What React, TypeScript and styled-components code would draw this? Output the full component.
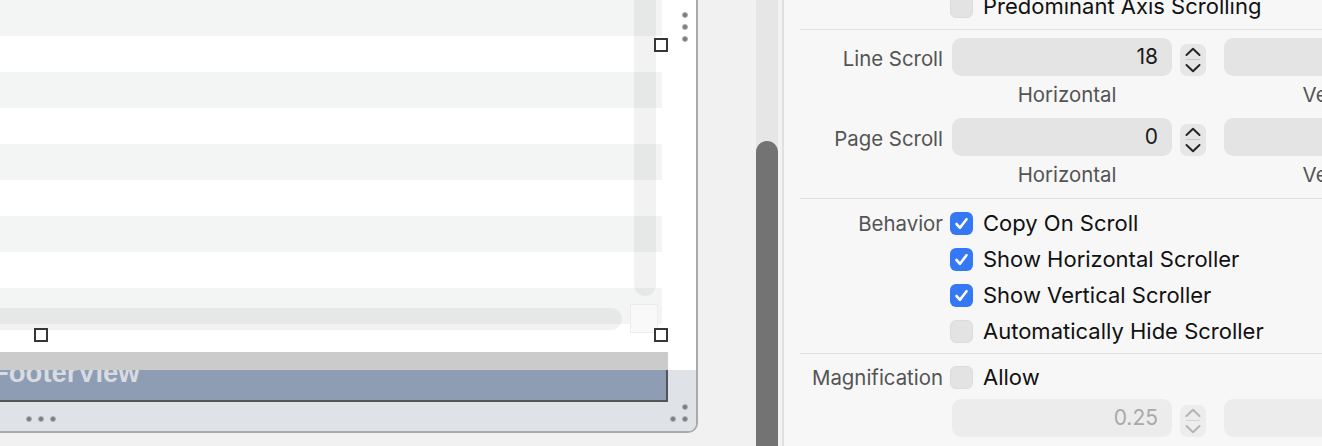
import React from "react";
import styled, { createGlobalStyle } from "styled-components";

const GlobalStyle = createGlobalStyle`
  html, body { margin: 0; padding: 0; }
  body {
    width: 1322px;
    height: 446px;
    overflow: hidden;
    background: #f1f1f1;
    font-family: Inter, "Noto Sans", sans-serif;
  }
`;

const Root = styled.div`
  display: flex;
  width: 1322px;
  height: 446px;
  overflow: hidden;
`;

/* ---------- canvas side ---------- */
const Canvas = styled.div`
  width: 756px;
  flex: none;
  background: #f1f1f1;
  overflow: hidden;
`;

const Window = styled.div`
  position: relative;
  width: 696px;
  height: 431px;
  background: #ffffff;
  border-right: 2px solid #a9a9a9;
  border-bottom: 2px solid #a9a9a9;
  border-bottom-right-radius: 10px;
  overflow: hidden;
  display: flex;
  flex-direction: column;
`;

const TableArea = styled.div`
  position: relative;
  height: 352px;
  flex: none;
`;

const ScrollView = styled.div`
  position: relative;
  width: 662px;
  height: 330px;
  overflow: hidden;
`;

const Row = styled.div<{ $alt: boolean }>`
  height: 36px;
  background: ${(p) => (p.$alt ? "#ffffff" : "#f3f4f4")};
`;

const VScroller = styled.div`
  position: absolute;
  left: 634px;
  top: 0;
  width: 22px;
  height: 296px;
  border-radius: 0 0 11px 11px;
  background: rgba(0, 0, 0, 0.05);
`;

const HScroller = styled.div`
  position: absolute;
  left: -30px;
  top: 308px;
  width: 652px;
  height: 22px;
  border-radius: 11px;
  background: rgba(0, 0, 0, 0.05);
`;

const Corner = styled.div`
  position: absolute;
  left: 630px;
  top: 304px;
  width: 26px;
  height: 27px;
  background: #f9f9f9;
  border: 1px solid #ececec;
`;

const Handle = styled.span<{ $x: number; $y: number }>`
  position: absolute;
  left: ${(p) => p.$x}px;
  top: ${(p) => p.$y}px;
  width: 10px;
  height: 10px;
  border: 2px solid #363636;
  background: #ffffff;
`;

const Dot = styled.span`
  display: block;
  width: 6px;
  height: 6px;
  border-radius: 50%;
  background: radial-gradient(circle, #7a7a7a 0 30%, #b3b3b3 65%, rgba(200, 200, 200, 0) 100%);
`;

const SideDots = styled.div`
  position: absolute;
  left: 682px;
  top: 12px;
  display: flex;
  flex-direction: column;
  gap: 6px;
`;

const BottomArea = styled.div`
  flex: 1;
  display: flex;
  flex-direction: column;
  background: linear-gradient(#ffffff 18px, #dfe2e7 18px);
`;

const FooterBox = styled.div`
  position: relative;
  width: 668px;
  height: 50px;
  flex: none;
  background: #8e9db4;
  box-shadow: inset -2px -2px 0 #555555;
  overflow: hidden;
`;

const FooterBar = styled.div`
  position: absolute;
  left: 0;
  top: 0;
  right: 0;
  height: 18px;
  background: #cbcbcb;
`;

const FooterLabel = styled.div`
  font-family: "Liberation Sans", Arial, sans-serif;
  font-weight: bold;
  font-size: 27.5px;
  line-height: 27px;
  color: #d8dbe0;
  margin-left: -8px;
  padding-top: 7px;
  white-space: nowrap;
`;

const BottomBar = styled.div`
  flex: 1;
  display: flex;
  justify-content: space-between;
  align-items: flex-end;
  padding: 0 8px 9px 26px;
`;

const DotRow = styled.div`
  display: flex;
  gap: 6px;
`;

const DotCorner = styled.div`
  display: grid;
  grid-template-columns: 6px 6px;
  grid-template-rows: 6px 6px;
  gap: 6px;
`;

const ScrollerColumn = styled.div`
  width: 22px;
  flex: none;
  background: #e6e6e6;
  display: flex;
  flex-direction: column;
  justify-content: flex-end;
`;

const Thumb = styled.div`
  height: 305px;
  background: #737373;
  border-radius: 11px 11px 0 0;
`;

const Edge = styled.div`
  width: 4px;
  flex: none;
  background: #f3f3f3;
  border-right: 2px solid #e0e0e0;
`;

/* ---------- inspector ---------- */
const Inspector = styled.div`
  flex: 1;
  min-width: 0;
  background: #f7f7f7;
  overflow: hidden;
  font-size: 20.4px;
  color: #151515;
`;

const Section = styled.div<{ $first?: boolean }>`
  margin-left: 16px;
  border-top: ${(p) => (p.$first ? "none" : "1px solid #e2e2e2")};
`;

const FirstSection = styled(Section)`
  margin-top: -12px;
  padding-bottom: 5px;
`;

const ScrollSection = styled(Section)`
  padding: 8px 0 11px;
`;

const BehaviorSection = styled(Section)`
  padding: 6px 0 4px;
`;

const MagSection = styled(Section)`
  padding: 5px 0 0;
`;

const FormRow = styled.div<{ $gapTop?: number }>`
  display: grid;
  grid-template-columns: 143px max-content;
  column-gap: 7px;
  align-items: center;
  margin-top: ${(p) => p.$gapTop ?? 0}px;
`;

const Label = styled.div<{ $drop?: number }>`
  text-align: right;
  color: #545454;
  white-space: nowrap;
  padding-top: ${(p) => p.$drop ?? 0}px;
`;

const CheckItem = styled.label`
  display: flex;
  align-items: center;
  gap: 10px;
  height: 36px;
  white-space: nowrap;
  font-size: 22px;
  color: #111111;
`;

const Box = styled.span<{ $on: boolean }>`
  width: 23px;
  height: 23px;
  flex: none;
  border-radius: 6px;
  box-sizing: border-box;
  background: ${(p) => (p.$on ? "#3478f6" : "#e3e3e3")};
  border: ${(p) => (p.$on ? "none" : "1px solid #dcdcdc")};
  display: flex;
  align-items: center;
  justify-content: center;
`;

const Fields = styled.div`
  display: flex;
  align-items: center;
  margin-left: 2px;
`;

const NumberField = styled.div<{ $disabled?: boolean }>`
  width: 220px;
  height: 38px;
  flex: none;
  box-sizing: border-box;
  border-radius: 9px;
  background: ${(p) => (p.$disabled ? "#ececec" : "#e4e4e4")};
  color: ${(p) => (p.$disabled ? "#a9a9a9" : "#1b1b1b")};
  text-align: right;
  padding-right: 14px;
  line-height: 38px;
  font-size: 21px;
`;

const StepperBox = styled.div<{ $disabled?: boolean }>`
  width: 26px;
  height: 32px;
  flex: none;
  margin: 6px 18px 0 8px;
  border-radius: 7px;
  background: ${(p) => (p.$disabled ? "#ededed" : "#e6e6e6")};
  display: flex;
`;

const Captions = styled.div<{ $last?: boolean }>`
  display: flex;
  margin: 7px 0 ${(p) => (p.$last ? 0 : 11)}px 157px;
`;

const Caption = styled.div`
  width: 220px;
  flex: none;
  margin-right: 52px;
  text-align: center;
  line-height: 24px;
  color: #545454;
`;

const Check = () => (
  <svg width="23" height="23" viewBox="0 0 23 23">
    <path
      d="M6.5 12 L10 15.8 L16.5 7.2"
      fill="none"
      stroke="#ffffff"
      strokeWidth="2.6"
      strokeLinecap="round"
      strokeLinejoin="round"
    />
  </svg>
);

const CheckBox = ({ on, text }: { on: boolean; text: string }) => (
  <CheckItem>
    <Box $on={on}>{on && <Check />}</Box>
    <span>{text}</span>
  </CheckItem>
);

const Stepper = ({ disabled }: { disabled?: boolean }) => {
  const c = disabled ? "#b4b4b4" : "#262626";
  return (
    <StepperBox $disabled={disabled}>
      <svg width="26" height="32" viewBox="0 0 26 32">
        <path d="M6.5 11 L13 4.8 L19.5 11" fill="none" stroke={c} strokeWidth="2" strokeLinecap="round" strokeLinejoin="round" />
        <path d="M6 15.5 H20" stroke={disabled ? "#d6d6d6" : "#c9c9c9"} strokeWidth="1" />
        <path d="M6.5 21 L13 27.2 L19.5 21" fill="none" stroke={c} strokeWidth="2" strokeLinecap="round" strokeLinejoin="round" />
      </svg>
    </StepperBox>
  );
};

const FieldPair = ({ value, disabled }: { value: string; disabled?: boolean }) => (
  <Fields>
    <NumberField $disabled={disabled}>{value}</NumberField>
    <Stepper disabled={disabled} />
    <NumberField $disabled={disabled}></NumberField>
  </Fields>
);

export default function App() {
  const rows = Array.from({ length: 10 }, (_, i) => i % 2 === 1);
  return (
    <>
      <GlobalStyle />
      <Root>
        <Canvas>
          <Window>
            <TableArea>
              <ScrollView>
                {rows.map((alt, i) => (
                  <Row key={i} $alt={alt} />
                ))}
                <VScroller />
                <HScroller />
              </ScrollView>
              <Corner />
              <Handle $x={654} $y={38} />
              <Handle $x={34} $y={328} />
              <Handle $x={654} $y={328} />
            </TableArea>
            <SideDots>
              <Dot />
              <Dot />
              <Dot />
            </SideDots>
            <BottomArea>
              <FooterBox>
                <FooterLabel>FooterView</FooterLabel>
                <FooterBar />
              </FooterBox>
              <BottomBar>
                <DotRow>
                  <Dot />
                  <Dot />
                  <Dot />
                </DotRow>
                <DotCorner>
                  <span />
                  <Dot />
                  <Dot />
                  <Dot />
                </DotCorner>
              </BottomBar>
            </BottomArea>
          </Window>
        </Canvas>
        <ScrollerColumn>
          <Thumb />
        </ScrollerColumn>
        <Edge />
        <Inspector>
          <FirstSection $first>
            <FormRow>
              <Label />
              <CheckBox on={false} text="Predominant Axis Scrolling" />
            </FormRow>
          </FirstSection>
          <ScrollSection>
            <FormRow>
              <Label $drop={2}>Line Scroll</Label>
              <FieldPair value="18" />
            </FormRow>
            <Captions>
              <Caption>Horizontal</Caption>
              <Caption>Vertical</Caption>
            </Captions>
            <FormRow>
              <Label $drop={2}>Page Scroll</Label>
              <FieldPair value="0" />
            </FormRow>
            <Captions $last>
              <Caption>Horizontal</Caption>
              <Caption>Vertical</Caption>
            </Captions>
          </ScrollSection>
          <BehaviorSection>
            <FormRow>
              <Label>Behavior</Label>
              <CheckBox on text="Copy On Scroll" />
            </FormRow>
            <FormRow>
              <Label />
              <CheckBox on text="Show Horizontal Scroller" />
            </FormRow>
            <FormRow>
              <Label />
              <CheckBox on text="Show Vertical Scroller" />
            </FormRow>
            <FormRow>
              <Label />
              <CheckBox on={false} text="Automatically Hide Scroller" />
            </FormRow>
          </BehaviorSection>
          <MagSection>
            <FormRow>
              <Label>Magnification</Label>
              <CheckBox on={false} text="Allow" />
            </FormRow>
            <FormRow $gapTop={4}>
              <Label />
              <FieldPair value="0.25" disabled />
            </FormRow>
          </MagSection>
        </Inspector>
      </Root>
    </>
  );
}
